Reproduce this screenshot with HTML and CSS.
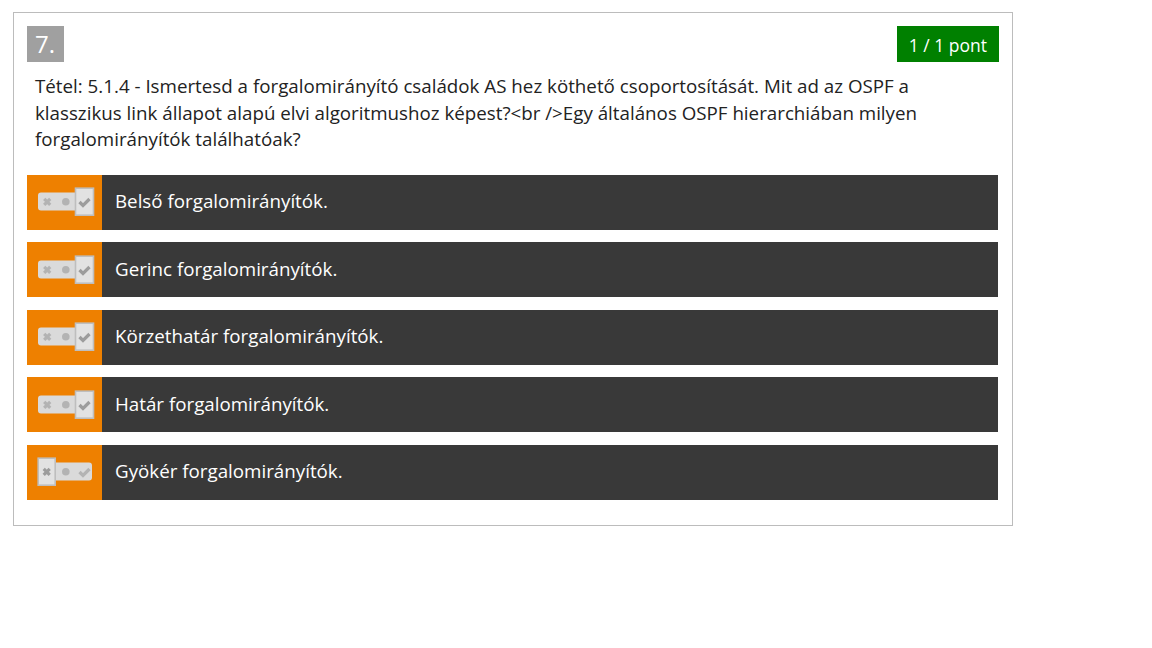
FILE: index.html
```html
<!DOCTYPE html>
<html lang="hu">
<head>
<meta charset="utf-8">
<title>Kérdés 7</title>
<link rel="stylesheet" href="styles.css">
</head>
<body>
<div class="question">
  <div class="q-head">
    <span class="q-num">7.</span>
    <span class="q-score">1 / 1 pont</span>
  </div>
  <p class="q-text">Tétel: 5.1.4 - Ismertesd a forgalomirányító családok AS hez köthető csoportosítását. Mit ad az OSPF a klasszikus link állapot alapú elvi algoritmushoz képest?&lt;br /&gt;Egy általános OSPF hierarchiában milyen forgalomirányítók találhatóak?</p>
  <div class="answers">
    <div class="answer">
      <div class="ans-mark"><svg class="toggle" width="58" height="30" viewBox="0 0 58 30"><rect x="1" y="5.5" width="54" height="18" rx="3" fill="#dadada"/><path d="M7.2 11.8l6 6M13.2 11.8l-6 6" stroke="#b3b3b3" stroke-width="3.2"/><circle cx="28.8" cy="14.8" r="3.8" fill="#b3b3b3"/><rect x="38.5" y="1.2" width="18" height="27" fill="#e2e2e2" stroke="#bebebe" stroke-width="1.6"/><path d="M42.5 15l3.5 3.5 6.5-6.5" stroke="#9c9c9c" stroke-width="3.2" fill="none"/></svg></div>
      <div class="ans-text">Belső forgalomirányítók.</div>
    </div>
    <div class="answer">
      <div class="ans-mark"><svg class="toggle" width="58" height="30" viewBox="0 0 58 30"><rect x="1" y="5.5" width="54" height="18" rx="3" fill="#dadada"/><path d="M7.2 11.8l6 6M13.2 11.8l-6 6" stroke="#b3b3b3" stroke-width="3.2"/><circle cx="28.8" cy="14.8" r="3.8" fill="#b3b3b3"/><rect x="38.5" y="1.2" width="18" height="27" fill="#e2e2e2" stroke="#bebebe" stroke-width="1.6"/><path d="M42.5 15l3.5 3.5 6.5-6.5" stroke="#9c9c9c" stroke-width="3.2" fill="none"/></svg></div>
      <div class="ans-text">Gerinc forgalomirányítók.</div>
    </div>
    <div class="answer">
      <div class="ans-mark"><svg class="toggle" width="58" height="30" viewBox="0 0 58 30"><rect x="1" y="5.5" width="54" height="18" rx="3" fill="#dadada"/><path d="M7.2 11.8l6 6M13.2 11.8l-6 6" stroke="#b3b3b3" stroke-width="3.2"/><circle cx="28.8" cy="14.8" r="3.8" fill="#b3b3b3"/><rect x="38.5" y="1.2" width="18" height="27" fill="#e2e2e2" stroke="#bebebe" stroke-width="1.6"/><path d="M42.5 15l3.5 3.5 6.5-6.5" stroke="#9c9c9c" stroke-width="3.2" fill="none"/></svg></div>
      <div class="ans-text">Körzethatár forgalomirányítók.</div>
    </div>
    <div class="answer">
      <div class="ans-mark"><svg class="toggle" width="58" height="30" viewBox="0 0 58 30"><rect x="1" y="5.5" width="54" height="18" rx="3" fill="#dadada"/><path d="M7.2 11.8l6 6M13.2 11.8l-6 6" stroke="#b3b3b3" stroke-width="3.2"/><circle cx="28.8" cy="14.8" r="3.8" fill="#b3b3b3"/><rect x="38.5" y="1.2" width="18" height="27" fill="#e2e2e2" stroke="#bebebe" stroke-width="1.6"/><path d="M42.5 15l3.5 3.5 6.5-6.5" stroke="#9c9c9c" stroke-width="3.2" fill="none"/></svg></div>
      <div class="ans-text">Határ forgalomirányítók.</div>
    </div>
    <div class="answer">
      <div class="ans-mark"><svg class="toggle" width="58" height="30" viewBox="0 0 58 30"><rect x="1" y="5.5" width="54" height="18" rx="3" fill="#dadada"/><rect x="1.2" y="1.2" width="17" height="27" fill="#e2e2e2" stroke="#bebebe" stroke-width="1.6"/><path d="M6.7 11.8l6 6M12.7 11.8l-6 6" stroke="#9c9c9c" stroke-width="3.2"/><circle cx="28.8" cy="14.8" r="3.8" fill="#b3b3b3"/><path d="M42.5 15l3.5 3.5 6.5-6.5" stroke="#b3b3b3" stroke-width="3.2" fill="none"/></svg></div>
      <div class="ans-text">Gyökér forgalomirányítók.</div>
    </div>
  </div>
</div>
</body>
</html>
```

FILE: styles.css
```css
html, body {
  margin: 0;
  padding: 0;
  background: #fff;
}
body {
  font-family: "Open Sans", "Noto Sans", sans-serif;
  color: #222;
}
.question {
  box-sizing: border-box;
  width: 1000px;
  margin: 12px 0 0 13px;
  border: 1px solid #bcbcbc;
  padding: 13px 13px 25px 13px;
}
.q-head {
  display: flex;
  justify-content: space-between;
  align-items: flex-start;
  height: 36px;
}
.q-num {
  box-sizing: border-box;
  width: 37px;
  height: 36px;
  background: #a0a0a0;
  color: #fff;
  font-size: 24px;
  line-height: 36px;
  padding-left: 8px;
}
.q-score {
  box-sizing: border-box;
  height: 36px;
  padding: 0 12px;
  background: #008000;
  color: #fff;
  font-size: 17.5px;
  line-height: 38px;
}
.q-text {
  margin: 11px 0 22px 0;
  padding: 0 8px;
  font-size: 18.75px;
  line-height: 26.5px;
}
.answers {
  display: flex;
  flex-direction: column;
  gap: 12.5px;
  margin-right: 1px;
}
.answer {
  display: flex;
  height: 55px;
  background: #393939;
}
.ans-mark {
  width: 75px;
  flex: none;
  background: #ee8000;
  display: flex;
  align-items: center;
  justify-content: center;
}
.toggle {
  display: block;
  margin-left: 2px;
}
.ans-text {
  padding-left: 13px;
  padding-bottom: 3px;
  display: flex;
  align-items: center;
  color: #fff;
  font-size: 18.75px;
}
```
